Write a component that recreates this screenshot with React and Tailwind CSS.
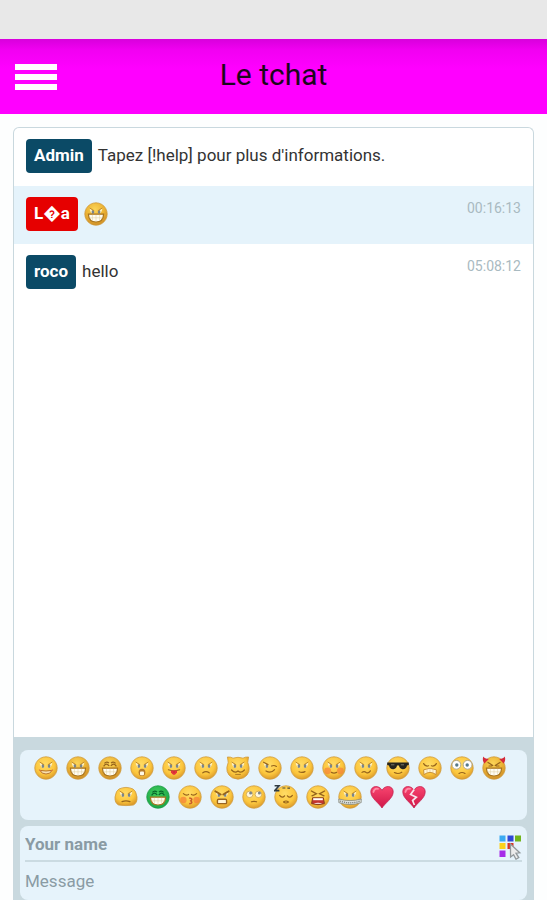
import React from "react";

const INK = "#96641c";

function Eyes() {
  return (
    <g>
      <path d="M5.6 6.6 L10.2 9 L9.8 12 Q6.6 12.2 5.6 6.6Z" fill="#fff3c4" />
      <path d="M18.4 6.6 L13.8 9 L14.2 12 Q17.4 12.2 18.4 6.6Z" fill="#fff3c4" />
      <ellipse cx="8.9" cy="9.9" rx="1.3" ry="2" fill="#7b858a" />
      <ellipse cx="15.1" cy="9.9" rx="1.3" ry="2" fill="#7b858a" />
      <path d="M5.6 6 L10.2 8.8 M18.4 6 L13.8 8.8" stroke="#c18c2c" strokeWidth="1" fill="none" />
    </g>
  );
}

function Grin() {
  return (
    <g transform="translate(0 12.2)">
      <path d="M4.4 0 H19.6 Q19.2 7.8 12 7.8 Q4.8 7.8 4.4 0Z" fill="#fffdf2" stroke="#a8731d" strokeWidth="1.2" />
      <path d="M8.4 0.6 V6.4 M12 0.6 V7.2 M15.6 0.6 V6.4 M5 3.6 H19" stroke="#dccb9c" strokeWidth="0.5" />
    </g>
  );
}

function HappyEyes({ color = INK }) {
  return (
    <path
      d="M5.6 10.4 Q8.2 6 11.2 10 M12.8 10 Q15.8 6 18.4 10.4 M6.4 7.4 Q8.8 4.8 11 7.2 M13 7.2 Q15.2 4.8 17.6 7.4"
      stroke={color}
      strokeWidth="1.2"
      fill="none"
    />
  );
}

function Line({ d, w = 1.2, color = INK }) {
  return <path d={d} stroke={color} strokeWidth={w} fill="none" strokeLinecap="round" />;
}

const faces = {
  smile: (
    <>
      <Eyes />
      <path d="M6 14.4 Q12 15.6 18 14.4 Q16.6 18 12 18 Q7.4 18 6 14.4Z" fill="#f9e0ae" stroke="#b8752a" strokeWidth="1" />
      <path d="M5 13.6 L7.2 15.4 M19 13.6 L16.8 15.4" stroke="#dd7d3a" strokeWidth="1.2" />
    </>
  ),
  grin: (<><Eyes /><Grin /></>),
  laugh: (<><HappyEyes /><Grin /></>),
  shock: (
    <>
      <Eyes />
      <ellipse cx="12" cy="16.4" rx="3.4" ry="3.6" fill="#b67b2c" />
      <rect x="10" y="15.4" width="4" height="3.8" rx="0.9" fill="#fff9e6" />
    </>
  ),
  tongue: (
    <>
      <Eyes />
      <Line d="M6.4 13.8 Q12 16 17.6 13.8" />
      <path d="M9 14.6 H15 V16.6 Q12 21.4 9 16.6Z" fill="#e5353c" />
      <path d="M12 15 V17" stroke="#a91e2a" strokeWidth="0.6" />
    </>
  ),
  sad: (<><Eyes /><Line d="M8.8 16.8 Q12 14.4 15.2 16.8" /></>),
  cat: (<><Eyes /><Line d="M5.6 14 Q8.8 17.6 12 15 Q15.2 17.6 18.4 14" /><Line d="M9.6 18.4 H14.4" w={0.8} /></>),
  wink: (
    <>
      <path d="M5.6 6.6 L10.2 9 L9.8 12 Q6.6 12.2 5.6 6.6Z" fill="#fff3c4" />
      <ellipse cx="8.9" cy="9.9" rx="1.3" ry="2" fill="#7b858a" />
      <Line d="M5.6 6.2 L10 8.6 M13.6 10 Q16 8.8 18.4 10.4" />
      <Line d="M8 15 Q13 17.8 16.6 13.6" />
    </>
  ),
  calm: (<><Eyes /><Line d="M9 15.8 Q12 17.2 15 15.6" /></>),
  blush: (
    <>
      <circle cx="5.6" cy="14.8" r="3.4" fill="#f5833a" opacity="0.7" />
      <circle cx="18.4" cy="14.8" r="3.4" fill="#f5833a" opacity="0.7" />
      <Eyes />
      <Line d="M9.4 16.4 Q12 17.8 14.6 16.4" />
    </>
  ),
  doubt: (<><Eyes /><Line d="M8 16.4 Q10 14.8 12.2 16.4 Q14.4 17.8 16.4 14.8" /></>),
  cool: (
    <>
      <path d="M1.2 6.6 H22.8 V9 L21 9.4 Q20.2 13.4 16.6 13.2 Q13.4 13 13 9.6 H11 Q10.6 13 7.4 13.2 Q3.8 13.4 3 9.4 L1.2 9Z" fill="#25241f" />
      <path d="M5 8.8 H8.4 M14.8 8.8 H18" stroke="#84806c" strokeWidth="0.9" />
      <Line d="M8.4 16.6 Q12 18.6 15.8 16.2" />
    </>
  ),
  sick: (
    <>
      <Line d="M5.6 7.6 Q7.4 10.8 10.6 9.8 M18.4 7.6 Q16.6 10.8 13.4 9.8" />
      <path d="M5.6 13.8 Q12 10.8 18.4 13.8 L18 18.6 Q15 16.4 12 16.4 Q9 16.4 6 18.6Z" fill="#fff6da" stroke="#c98f35" strokeWidth="1" />
      <path d="M9 13 V16.4 M12 12.6 V16.2 M15 13 V16.4" stroke="#dfc081" strokeWidth="0.6" />
    </>
  ),
  dizzy: (
    <>
      <circle cx="6.4" cy="8.8" r="4.4" fill="#fff" stroke="#a9a18a" strokeWidth="0.9" />
      <circle cx="17.6" cy="8.8" r="4.4" fill="#fff" stroke="#a9a18a" strokeWidth="0.9" />
      <circle cx="6.8" cy="9" r="1.7" fill="#55798a" />
      <circle cx="17.2" cy="9" r="1.7" fill="#55798a" />
      <Line d="M9 17.4 Q12 15.6 15 17.4" />
    </>
  ),
  devil: (
    <>
      <path d="M1.2 0.4 Q2.6 2.8 6.8 3 L2.4 7.6 Q0 4.4 1.2 0.4Z M22.8 0.4 Q21.4 2.8 17.2 3 L21.6 7.6 Q24 4.4 22.8 0.4Z" fill="#d42a3a" />
      <Line d="M6 6.4 L10.8 9.4 M18 6.4 L13.2 9.4 M7 10 H9.8 M14.2 10 H17" />
      <Grin />
    </>
  ),
  flat: (<><Eyes /><Line d="M8 16.6 Q12 15.2 16 16.6" /></>),
  green: (<><HappyEyes color="#08662b" /><Grin /></>),
  kiss: (
    <>
      <circle cx="5.4" cy="15" r="3.2" fill="#f5833a" opacity="0.75" />
      <circle cx="18.6" cy="15" r="3.2" fill="#f5833a" opacity="0.75" />
      <Line d="M5.4 8.6 Q8 11 10.6 9.4 M13.4 9.4 Q16 11 18.6 8.6" />
      <path d="M11.2 13 Q15.6 13.6 12.8 15.8 Q15.6 18 11.2 18.8" stroke="#c75a2c" strokeWidth="1.5" fill="none" />
    </>
  ),
  angry: (
    <>
      <Eyes />
      <Line d="M5.2 6.2 L10.8 9.6 M18.8 6.2 L13.2 9.6" w={1.7} />
      <rect x="7.4" y="14.2" width="9.2" height="4.4" rx="1.2" fill="#fff4d6" stroke="#9a6420" strokeWidth="1.4" />
    </>
  ),
  rolling: (
    <>
      <ellipse cx="7.6" cy="9.4" rx="3.3" ry="3.2" fill="#fff8dd" stroke="#c6983a" strokeWidth="0.7" />
      <ellipse cx="16.4" cy="9.4" rx="3.3" ry="3.2" fill="#fff8dd" stroke="#c6983a" strokeWidth="0.7" />
      <circle cx="8.6" cy="8" r="1.5" fill="#7b858a" />
      <circle cx="17.4" cy="8" r="1.5" fill="#7b858a" />
      <Line d="M9.4 16.8 Q12 15.8 14.6 16.8" />
    </>
  ),
  sleep: (
    <>
      <Line d="M5.6 10.4 Q8.2 13.6 10.6 10.8 M13.4 10.8 Q15.8 13.6 18.4 10.4" />
      <Line d="M9.6 17 Q12 15 14.4 17 Q12 19 9.6 17" />
      <path d="M0.6 0.8 H5 L0.8 5.6 H5.4" stroke="#303c42" strokeWidth="1.6" fill="none" />
      <path d="M8.4 3 H11.4 M13.4 3.2 H16" stroke="#4a4a3c" strokeWidth="1.2" />
    </>
  ),
  rage: (
    <>
      <Line d="M5.4 6 L10.4 8.8 L6 10.8 M18.6 6 L13.6 8.8 L18 10.8" w={1.4} />
      <path d="M6.6 12.8 H17.4 L18.4 18.6 Q12 20.8 5.6 18.6Z" fill="#c4352e" stroke="#85401c" strokeWidth="1" />
      <path d="M7.2 13.2 H16.8 V15.2 H7.2Z" fill="#fff" />
      <path d="M7.6 18.8 Q12 16.8 16.4 18.8" fill="#fff" />
    </>
  ),
  zipped: (
    <>
      <Eyes />
      <path d="M0.8 14 Q12 17.2 23.2 14 V17.6 Q12 21.6 0.8 17.6Z" fill="#dfe2de" stroke="#85897f" strokeWidth="0.8" />
      <path d="M1.8 16 Q12 19.6 22.2 16" stroke="#7c817a" strokeWidth="1.3" strokeDasharray="1.2 0.9" fill="none" />
    </>
  ),
};

const HEART = "M12 23 C9.4 18.4 0.8 13.4 0.8 6.8 C0.8 0.4 9.4 -0.2 12 5.4 C14.6 -0.2 23.2 0.4 23.2 6.8 C23.2 13.4 14.6 18.4 12 23Z";

function shape(name) {
  if (name === "flat") return "M5 4 Q12 0.8 19 4 Q22 5.4 23 12 Q23.4 18 19.4 20 Q12 21.2 4.6 20 Q0.6 18 1 12 Q2 5.4 5 4Z";
  if (name === "cat") return "M1.4 1 Q5 0.8 7 2.2 Q12 0.4 17 2.2 Q19 0.8 22.6 1 Q22 4.4 21.8 6.4 Q26 17 17.6 21.8 Q12 24.6 6.4 21.8 Q-2 17 2.2 6.4 Q2 4.4 1.4 1Z";
  return "M12 0.8 A11.2 11.2 0 1 1 11.99 0.8Z";
}

function Emoji({ name }) {
  const heart = name === "heart" || name === "broken";
  const deep = name === "grin" || name === "laugh" || name === "devil";
  const fill = heart
    ? "url(#heartFill)"
    : name === "green"
      ? "url(#greenFill)"
      : deep
        ? "url(#amberFill)"
        : "url(#goldFill)";
  const edge = heart ? "#c4214f" : name === "green" ? "#159a40" : "#cf9a3c";
  return (
    <svg viewBox="0 0 24 24" className="block size-6" aria-hidden="true">
      <path d={heart ? HEART : shape(name)} fill={fill} stroke={edge} strokeWidth="0.8" />
      {heart && <path d="M3.4 7 Q4.4 3 8 3.8" stroke="#ff8ba6" strokeWidth="1.8" fill="none" strokeLinecap="round" />}
      {name === "broken" && (
        <path d="M12.2 4.6 L8.6 9.4 L14.4 12.2 L10.6 15.6 L12.4 20" stroke="#f7e6ec" strokeWidth="1.7" fill="none" />
      )}
      {faces[name]}
    </svg>
  );
}

const emojis = [
  "smile", "grin", "laugh", "shock", "tongue", "sad", "cat", "wink", "calm", "blush", "doubt", "cool", "sick",
  "dizzy", "devil", "flat", "green", "kiss", "angry", "rolling", "sleep", "rage", "zipped", "heart", "broken",
];

const messages = [
  { author: "Admin", tone: "bg-[#0b4a66]", text: "Tapez [!help] pour plus d'informations." },
  { author: "L\uFFFDa", tone: "bg-[#e60000]", emoji: "grin", time: "00:16:13" },
  { author: "roco", tone: "bg-[#0b4a66]", text: "hello", time: "05:08:12" },
];

function PaletteIcon() {
  return (
    <svg viewBox="0 0 24 26" className="block h-[26px] w-6" aria-hidden="true">
      <rect x="1.5" y="1.5" width="6" height="6" fill="#3aaaf2" />
      <rect x="9.5" y="1.5" width="6" height="6" fill="#2f49d6" />
      <rect x="17" y="1.5" width="6" height="6" fill="#72b51b" />
      <rect x="1.5" y="9" width="6" height="6" fill="#fbd21d" />
      <rect x="9.5" y="9" width="6" height="6" fill="#d93425" />
      <rect x="1.5" y="16.5" width="6" height="6.5" fill="#a62be8" />
      <path d="M12.4 10 L21.8 18.8 L18 19.2 L20.8 23.6 L18 25.2 L15.6 20.8 L12.6 23Z" fill="#ececec" stroke="#92989b" strokeWidth="1.3" />
    </svg>
  );
}

export default function App() {
  return (
    <div className="flex h-screen flex-col bg-[#fdfefe] font-[Roboto,sans-serif] text-[#333]">
      <svg className="absolute size-0" aria-hidden="true">
        <defs>
          <radialGradient id="goldFill" cx="0.45" cy="0.35" r="0.65">
            <stop offset="0" stopColor="#ffdc66" />
            <stop offset="0.65" stopColor="#fcc73e" />
            <stop offset="1" stopColor="#dd9c2b" />
          </radialGradient>
          <radialGradient id="amberFill" cx="0.45" cy="0.3" r="0.7">
            <stop offset="0" stopColor="#fbd458" />
            <stop offset="0.55" stopColor="#edb536" />
            <stop offset="1" stopColor="#cf8f26" />
          </radialGradient>
          <radialGradient id="greenFill" cx="0.45" cy="0.35" r="0.65">
            <stop offset="0" stopColor="#3fce5c" />
            <stop offset="1" stopColor="#1ca548" />
          </radialGradient>
          <linearGradient id="heartFill" x1="0" y1="0" x2="0" y2="1">
            <stop offset="0" stopColor="#f8456f" />
            <stop offset="1" stopColor="#cf1648" />
          </linearGradient>
        </defs>
      </svg>

      <div className="h-[39px] shrink-0 bg-[#e8e8e8]" />
      <header className="grid h-[75px] shrink-0 grid-cols-[1fr_auto_1fr] items-center bg-linear-to-b from-[#d800dc] via-[#f200f2] via-15% to-[#ff00ff] to-40% px-[15px]">
        <button type="button" aria-label="Menu" className="flex w-[42px] flex-col gap-1">
          <span className="h-[6px] bg-white" />
          <span className="h-[6px] bg-white" />
          <span className="h-[6px] bg-white" />
        </button>
        <h1 className="pb-1 text-[30px] leading-9 text-[#1c061c]">Le tchat</h1>
      </header>

      <main className="mx-[13px] mt-[13px] flex min-h-0 flex-1 flex-col overflow-hidden rounded-t-md border border-b-0 border-[#c9d8de] bg-white">
        <ul className="min-h-0 flex-1">
          {messages.map((m) => (
            <li key={m.author} className="flex h-[58px] items-center gap-[6px] px-3 pb-0.5 even:bg-[#e5f3fb]">
              <span className={`flex h-[34px] items-center rounded px-2 text-[17px] font-bold text-white ${m.tone}`}>
                {m.author}
              </span>
              {m.emoji ? <Emoji name={m.emoji} /> : <span className="text-[17px]">{m.text}</span>}
              {m.time && <time className="ml-auto self-start pt-3 text-[14px] leading-5 text-[#a9bac1]">{m.time}</time>}
            </li>
          ))}
        </ul>

        <form className="flex shrink-0 flex-col gap-[6px] bg-[#c9d9df] px-[6px] pt-[13px]">
          <div className="flex h-[70px] flex-wrap content-start justify-center gap-y-[5px] rounded-lg bg-[#e6f3fb] pt-[6px]">
            {emojis.map((name) => (
              <button key={name} type="button" aria-label={name} className="h-6 w-8">
                <Emoji name={name} />
              </button>
            ))}
          </div>
          <div className="rounded-lg bg-[#e6f3fb] px-[5px]">
            <div className="flex h-9 items-end border-b-2 border-[#cbdbe2]">
              <input
                type="text"
                aria-label="Your name"
                placeholder="Your name"
                className="h-8 min-w-0 flex-1 text-[17px] font-bold outline-none placeholder:text-[#8a9ba4]"
              />
              <button type="button" aria-label="Color">
                <PaletteIcon />
              </button>
            </div>
            <input
              type="text"
              aria-label="Message"
              placeholder="Message"
              className="block h-[38px] w-full text-[17px] outline-none placeholder:text-[#8a9ba4]"
            />
          </div>
        </form>
      </main>
    </div>
  );
}
